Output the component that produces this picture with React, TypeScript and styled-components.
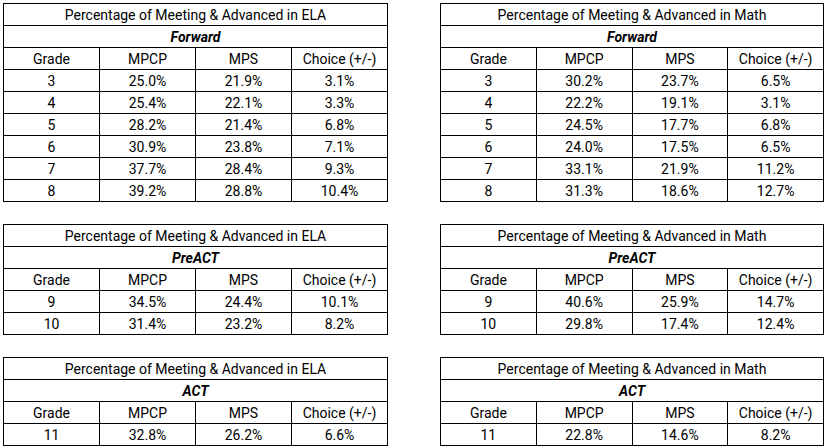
import styled, { createGlobalStyle } from 'styled-components';

type Row = [string, string, string, string];

interface Block {
  subject: string;
  test: string;
  rows: Row[];
}

const BLOCKS: Block[] = [
  {
    subject: 'ELA',
    test: 'Forward',
    rows: [
      ['3', '25.0%', '21.9%', '3.1%'],
      ['4', '25.4%', '22.1%', '3.3%'],
      ['5', '28.2%', '21.4%', '6.8%'],
      ['6', '30.9%', '23.8%', '7.1%'],
      ['7', '37.7%', '28.4%', '9.3%'],
      ['8', '39.2%', '28.8%', '10.4%'],
    ],
  },
  {
    subject: 'Math',
    test: 'Forward',
    rows: [
      ['3', '30.2%', '23.7%', '6.5%'],
      ['4', '22.2%', '19.1%', '3.1%'],
      ['5', '24.5%', '17.7%', '6.8%'],
      ['6', '24.0%', '17.5%', '6.5%'],
      ['7', '33.1%', '21.9%', '11.2%'],
      ['8', '31.3%', '18.6%', '12.7%'],
    ],
  },
  {
    subject: 'ELA',
    test: 'PreACT',
    rows: [
      ['9', '34.5%', '24.4%', '10.1%'],
      ['10', '31.4%', '23.2%', '8.2%'],
    ],
  },
  {
    subject: 'Math',
    test: 'PreACT',
    rows: [
      ['9', '40.6%', '25.9%', '14.7%'],
      ['10', '29.8%', '17.4%', '12.4%'],
    ],
  },
  {
    subject: 'ELA',
    test: 'ACT',
    rows: [['11', '32.8%', '26.2%', '6.6%']],
  },
  {
    subject: 'Math',
    test: 'ACT',
    rows: [['11', '22.8%', '14.6%', '8.2%']],
  },
];

const HEADERS: Row = ['Grade', 'MPCP', 'MPS', 'Choice (+/-)'];

function ScoreTable({ block }: { block: Block }) {
  return (
    <Table>
      <colgroup>
        <col />
        <col />
        <col />
        <col />
      </colgroup>
      <tbody>
        <tr>
          <TitleCell colSpan={4}>
            Percentage of Meeting &amp; Advanced in {block.subject}
          </TitleCell>
        </tr>
        <tr>
          <TestCell colSpan={4}>{block.test}</TestCell>
        </tr>
        <tr>
          {HEADERS.map((h) => (
            <Cell key={h}>{h}</Cell>
          ))}
        </tr>
        {block.rows.map((r) => (
          <tr key={r[0]}>
            {r.map((v, i) => (
              <Cell key={i}>{v}</Cell>
            ))}
          </tr>
        ))}
      </tbody>
    </Table>
  );
}

export default function App() {
  return (
    <>
      <GlobalStyle />
      <Page>
        {BLOCKS.map((b) => (
          <ScoreTable key={b.subject + b.test} block={b} />
        ))}
      </Page>
    </>
  );
}

const GlobalStyle = createGlobalStyle`
  html, body {
    margin: 0;
    background: #ffffff;
  }
  body {
    font-family: Roboto, "Liberation Sans", sans-serif;
    color: #000000;
  }
`;

const Page = styled.div`
  display: grid;
  grid-template-columns: 385px 384px;
  column-gap: 52px;
  row-gap: 22px;
  align-items: start;
  padding: 3px 0 0 3px;
`;

const Table = styled.table`
  width: 100%;
  border-collapse: collapse;
  table-layout: fixed;
  font-size: 14px;
`;

const Cell = styled.td`
  height: 21px;
  padding: 0;
  border: 1px solid #000;
  text-align: center;
  vertical-align: middle;
  line-height: 20px;
  white-space: nowrap;
`;

const TitleCell = styled(Cell)``;

const TestCell = styled(Cell)`
  font-weight: 700;
  font-style: italic;
`;
